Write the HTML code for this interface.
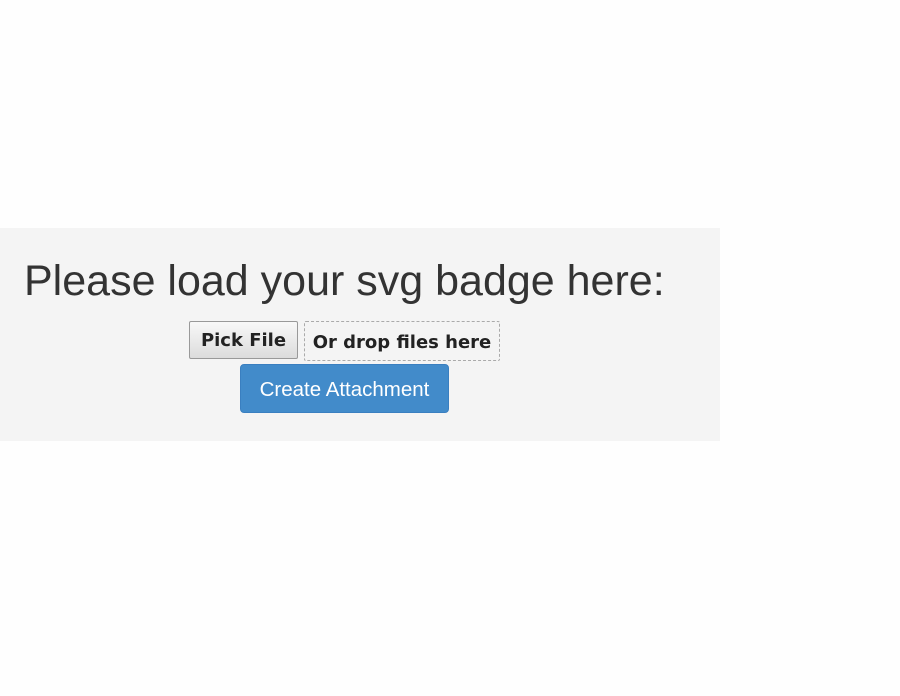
<!DOCTYPE html>
<html><head><style>
body{margin:0;width:900px;height:696px;background:#fefefe;position:relative;font-family:"Liberation Sans",sans-serif;overflow:hidden}
.panel{position:absolute;left:0;top:228px;width:720px;height:213px;background:#f4f4f4}
h1{position:absolute;left:24px;top:255px;margin:0;font-weight:normal;font-size:43px;color:#333;line-height:52px;white-space:nowrap}
.pick{position:absolute;left:189px;top:321px;width:107px;height:36px;border:1px solid #999;border-radius:2px;background:linear-gradient(#f8f8f8,#dcdcdc);font:bold 18px "DejaVu Sans",sans-serif;color:#222;text-align:center;line-height:37px;white-space:nowrap}
.drop{position:absolute;left:304px;top:321px;width:194px;height:38px;border:1px dashed #aaa;border-radius:2px;font:bold 18px "DejaVu Sans",sans-serif;color:#222;text-align:center;line-height:41px;white-space:nowrap}
.btn{position:absolute;left:240px;top:364px;width:209px;height:49px;background:#428bca;border:1px solid #3a7fc0;box-sizing:border-box;border-radius:4px;color:#fff;font-size:20.5px;text-align:center;line-height:49px;white-space:nowrap}
</style></head><body>
<div class="panel"></div>
<h1>Please load your svg badge here:</h1>
<div class="pick">Pick File</div>
<div class="drop">Or drop files here</div>
<div class="btn">Create Attachment</div>
</body></html>
